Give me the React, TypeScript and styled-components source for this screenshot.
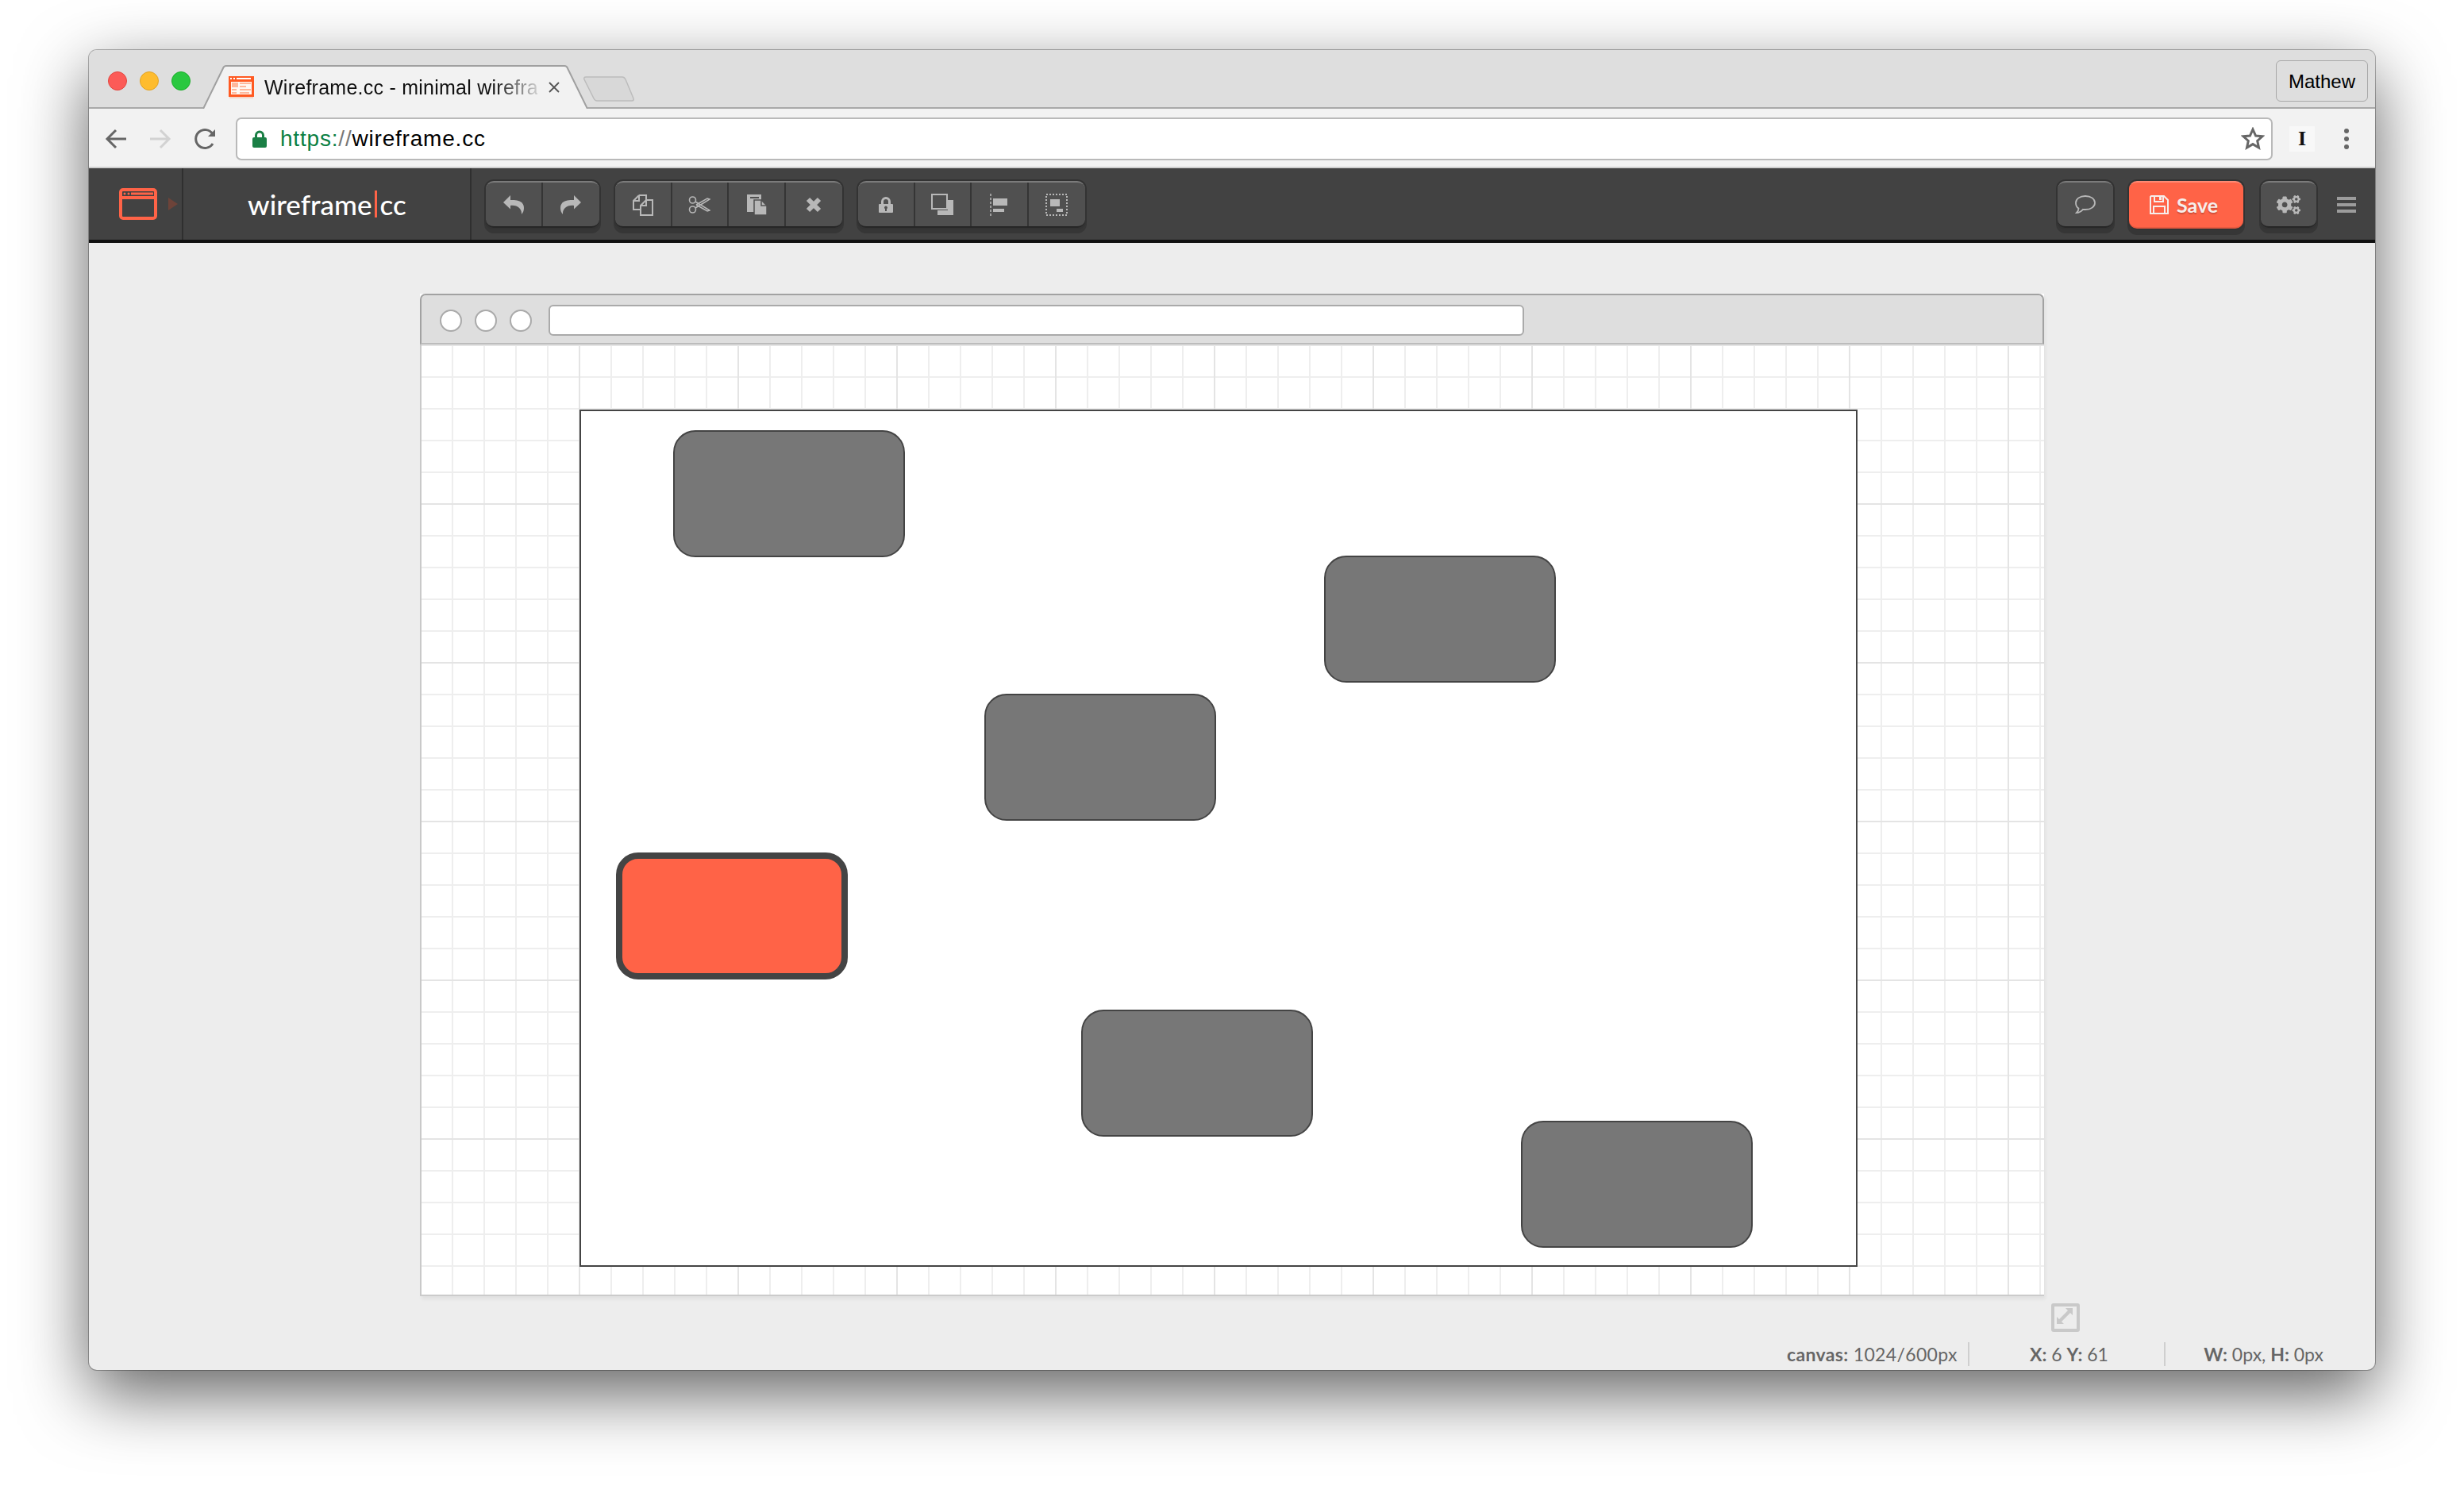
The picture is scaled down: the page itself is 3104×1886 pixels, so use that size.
import React from "react";
import styled, { createGlobalStyle } from "styled-components";
import { FaCogs } from "react-icons/fa";

const GlobalStyle = createGlobalStyle`
  html, body {
    margin: 0;
    padding: 0;
    background: #fff;
  }
  * {
    box-sizing: border-box;
  }
`;

const Page = styled.div`
  width: 3104px;
  height: 1886px;
  padding: 63px 0 0 112px;
  overflow: hidden;
  background: #fff;
`;

const Window = styled.div`
  width: 2880px;
  height: 1663px;
  display: flex;
  flex-direction: column;
  border-radius: 10px;
  background: #ededed;
  overflow: hidden;
  box-shadow: 0 0 0 1px rgba(0, 0, 0, 0.28), 0 30px 86px 0 rgba(0, 0, 0, 0.62);
`;

const TabStrip = styled.div`
  height: 74px;
  flex: none;
  display: flex;
  align-items: flex-end;
  position: relative;
  background: #dedede;
  border-bottom: 2px solid #a9a9a9;
  padding-left: 24px;
`;

const Lights = styled.div`
  display: flex;
  gap: 16px;
  align-self: flex-start;
  margin-top: 27px;
`;

const Light = styled.span<{ $color: string; $edge: string }>`
  width: 24px;
  height: 24px;
  border-radius: 50%;
  background: ${(p) => p.$color};
  border: 1px solid ${(p) => p.$edge};
`;

const Tab = styled.div`
  position: relative;
  width: 484px;
  height: 55px;
  margin: 0 0 -2px 16px;
  padding: 14px 0 0 32px;
  display: flex;
  align-items: flex-start;
`;

const TabShape = styled.svg`
  position: absolute;
  left: 0;
  top: 0;
`;

const Favicon = styled.svg`
  position: relative;
  flex: none;
`;

const TabTitle = styled.span`
  position: relative;
  width: 344px;
  margin-left: 13px;
  font: 25px/28px "Liberation Sans", Arial, sans-serif;
  letter-spacing: 0.25px;
  color: #111;
  white-space: nowrap;
  overflow: hidden;
  -webkit-mask-image: linear-gradient(to right, #000 84%, rgba(0, 0, 0, 0.15));
  mask-image: linear-gradient(to right, #000 84%, rgba(0, 0, 0, 0.15));
`;

const TabClose = styled.svg`
  position: relative;
  margin: 7px 0 0 14px;
`;

const NewTab = styled.svg`
  align-self: flex-start;
  margin: 33px 0 0 -6px;
`;

const ProfileButton = styled.div`
  width: 116px;
  height: 52px;
  margin-left: auto;
  margin-right: 9px;
  align-self: flex-start;
  margin-top: 13px;
  border: 1px solid #a8a8a8;
  border-radius: 6px;
  font: 24px/52px "Liberation Sans", Arial, sans-serif;
  color: #000;
  text-align: center;
`;

const AddressBar = styled.div`
  height: 75px;
  flex: none;
  display: flex;
  align-items: center;
  background: #f2f2f2;
  padding: 2px 0 0 20px;
  border-bottom: 2px solid #cfcfcf;
`;

const NavIcon = styled.svg`
  flex: none;
  margin-right: 28px;
`;

const Omnibox = styled.div`
  width: 2566px;
  height: 54px;
  margin-left: -5px;
  display: flex;
  align-items: center;
  padding: 0 8px 0 19px;
  background: #fff;
  border: 2px solid #b9b9b9;
  border-radius: 7px;
`;

const Url = styled.div`
  margin-left: 17px;
  font: 28px/1 "Liberation Sans", Arial, sans-serif;
  letter-spacing: 0.8px;
  color: #000;
`;

const UrlScheme = styled.span`
  color: #0b8043;
`;

const UrlSlashes = styled.span`
  color: #777;
`;

const StarIcon = styled.svg`
  margin-left: auto;
`;

const ExtensionIcon = styled.div`
  width: 32px;
  height: 32px;
  margin-left: 21px;
  background: #f8f8f8;
  font: bold 26px/32px "Liberation Serif", "Times New Roman", serif;
  color: #111;
  text-align: center;
`;

const MenuDots = styled.div`
  margin-left: 37px;
  display: flex;
  flex-direction: column;
  gap: 4px;
`;

const MenuDot = styled.span`
  width: 6px;
  height: 6px;
  border-radius: 50%;
  background: #666;
`;

const AppBar = styled.div`
  height: 94px;
  flex: none;
  display: flex;
  align-items: flex-start;
  background: #424242;
  border-bottom: 4px solid #111;
  padding-right: 24px;
`;

const LogoCell = styled.div`
  width: 119px;
  height: 90px;
  flex: none;
  display: flex;
  align-items: center;
  padding-left: 38px;
  border-right: 2px solid #2f2f2f;
`;

const LogoArrow = styled.span`
  margin-left: 14px;
  border-style: solid;
  border-width: 8px 0 8px 12px;
  border-color: transparent transparent transparent #6d4339;
`;

const BrandCell = styled.div`
  width: 363px;
  height: 90px;
  flex: none;
  display: flex;
  align-items: center;
  padding: 0 0 0 81px;
  border-right: 2px solid #2f2f2f;
  font: 500 35px/1 Lato, sans-serif;
  color: #fff;
`;

const BrandBar = styled.span`
  width: 3px;
  height: 34px;
  margin: 0 3px 0 4px;
  background: #ff6347;
`;

const Tools = styled.div`
  display: flex;
  gap: 20px;
  margin: 16px 0 0 18px;
`;

const ToolGroup = styled.div`
  display: flex;
  height: 59px;
  border-radius: 10px;
  overflow: hidden;
  background: #505050;
  box-shadow: 0 0 0 2px #333, 0 5px 0 2px #363636;
  border-top: 2px solid #7b7b7b;
  border-bottom: 2px solid #262626;
`;

const ToolButton = styled.div`
  width: 71.5px;
  height: 100%;
  display: flex;
  align-items: center;
  justify-content: center;
  border-right: 2px solid #353535;
  color: #b8b8b8;
  &:last-child {
    border-right: none;
  }
`;

const RightTools = styled.div`
  display: flex;
  align-items: flex-start;
  margin: 16px 0 0 auto;
`;

const SquareButton = styled(ToolButton)`
  width: 70px;
  height: 59px;
  border: none;
  border-top: 2px solid #7b7b7b;
  border-bottom: 2px solid #262626;
  border-radius: 10px;
  background: #505050;
  box-shadow: 0 0 0 2px #333, 0 5px 0 2px #363636;
  &:last-child {
    border-right: none;
  }
`;

const SaveButton = styled.div`
  width: 144px;
  height: 60px;
  margin: 0 22px 0 20px;
  display: flex;
  align-items: center;
  gap: 10px;
  padding-left: 26px;
  border-radius: 10px;
  background: #ff6347;
  border-top: 2px solid #ff8a74;
  border-bottom: 2px solid #e85a40;
  box-shadow: 0 0 0 2px #333, 0 6px 0 2px #363636;
  font: 700 25px/1 Lato, sans-serif;
  color: #f6eeec;
  text-shadow: 0 2px 1px rgba(0, 0, 0, 0.18);
`;

const Hamburger = styled.div`
  margin: 20px 0 0 26px;
  display: flex;
  flex-direction: column;
  gap: 4px;
`;

const HamburgerBar = styled.span`
  width: 24px;
  height: 4px;
  background: #9c9c9c;
`;

const Workspace = styled.div`
  flex: 1;
  display: flex;
  flex-direction: column;
  padding: 64px 0 0 417px;
`;

const Mock = styled.div`
  width: 2046px;
  height: 1263px;
  flex: none;
  display: flex;
  flex-direction: column;
  background: #fff;
  box-shadow: 2px 4px 4px rgba(0, 0, 0, 0.05);
`;

const MockHead = styled.div`
  height: 64px;
  flex: none;
  display: flex;
  align-items: center;
  gap: 16px;
  padding: 3px 0 0 23px;
  background: #dedede;
  border: 2px solid #a2a2a2;
  border-bottom: 2px solid #bcbcbc;
  border-radius: 7px 7px 0 0;
`;

const MockDot = styled.span`
  width: 28px;
  height: 28px;
  border-radius: 50%;
  background: #fff;
  border: 2px solid #aaa;
`;

const MockUrl = styled.div`
  width: 1229px;
  height: 39px;
  margin-left: 5px;
  background: #fff;
  border: 2px solid #aaa;
  border-radius: 6px;
`;

const Grid = styled.div`
  flex: 1;
  padding: 82px 0 0 199px;
  border-left: 2px solid #c9c9c9;
  border-bottom: 2px solid #cbcbcb;
  background-color: #fff;
  background-image: linear-gradient(to right, #e4e4e4 2px, transparent 2px),
    linear-gradient(to bottom, #e4e4e4 2px, transparent 2px),
    linear-gradient(to right, #eee 2px, transparent 2px),
    linear-gradient(to bottom, #eee 2px, transparent 2px);
  background-size: 200px 200px, 200px 200px, 40px 40px, 40px 40px;
  background-position: 198px 0, 0 200px, 38px 0, 0 40px;
`;

const Canvas = styled.div`
  position: relative;
  width: 1610px;
  height: 1080px;
  background: #fff;
  border: 2px solid #444;
`;

const Shape = styled.div<{ $x: number; $y: number; $active?: boolean }>`
  position: absolute;
  left: ${(p) => p.$x}px;
  top: ${(p) => p.$y}px;
  width: 292px;
  height: 160px;
  border-radius: 28px;
  background: ${(p) => (p.$active ? "#ff6347" : "#777")};
  border: ${(p) => (p.$active ? 8 : 2)}px solid #444;
`;

const ResizeHandle = styled.div`
  width: 36px;
  height: 36px;
  flex: none;
  margin: 9px 0 0 2055px;
  border: 4px solid #c9c9c9;
  border-radius: 3px;
`;

const StatusBar = styled.div`
  display: flex;
  justify-content: flex-end;
  height: 30px;
  margin-top: 13px;
  padding-right: 65px;
  font: 23px/30px Lato, sans-serif;
  color: #666;
`;

const StatusItem = styled.div<{ $width: number; $align: string; $divider?: boolean; $inset?: number; $tracking?: number }>`
  width: ${(p) => p.$width}px;
  text-align: ${(p) => p.$align};
  padding: 0 ${(p) => (p.$divider ? 14 : 0)}px 0 ${(p) => p.$inset ?? 0}px;
  border-right: ${(p) => (p.$divider ? "2px solid #cfcfcf" : "none")};
  letter-spacing: ${(p) => p.$tracking ?? 0}px;
  white-space: nowrap;

  b {
    font-weight: 700;
  }
`;

const shapes = [
  { x: 116, y: 24 },
  { x: 936, y: 182 },
  { x: 508, y: 356 },
  { x: 630, y: 754 },
  { x: 1184, y: 894 },
  { x: 44, y: 556, active: true },
];

const iconProps = { width: 28, height: 28, viewBox: "0 0 28 28" };

const UndoIcon = () => (
  <svg width="26" height="24" viewBox="0 0 26 24" fill="currentColor">
    <path d="M0 9L9 0v6c10-.5 17 2 17 10 0 3-1 6-3 8 .5-7-5-12-14-11v4.500z" />
  </svg>
);

const RedoIcon = () => (
  <svg width="26" height="24" viewBox="0 0 26 24" fill="currentColor">
    <path d="M26 9L17 0v6C7 5.500 0 8 0 16c0 3 1 6 3 8-.5-7 5-12 14-11v4.500z" />
  </svg>
);

const CopyIcon = () => (
  <svg {...iconProps} fill="none" stroke="currentColor" strokeWidth="2">
    <path d="M9 2h9v6" />
    <path d="M9 2L2 9v11h9" />
    <path d="M9 2v7H2" />
    <path d="M18 8h8v19H11V15z" />
    <path d="M18 8v7h-7" />
  </svg>
);

const ScissorsIcon = () => (
  <svg {...iconProps} fill="none" stroke="currentColor" strokeWidth="1.600">
    <circle cx="5.500" cy="8" r="4" />
    <circle cx="5.500" cy="20" r="4" />
    <path d="M9 10l18 11-3 1-14-8" />
    <path d="M9 18l18-11-3-1-14 8" />
  </svg>
);

const PasteIcon = () => (
  <svg {...iconProps} fill="currentColor">
    <path d="M2 1h18v22H2z" />
    <rect x="6" y="4" width="11" height="2" fill="#505050" />
    <path d="M11 8h9l7 7v12H11z" stroke="#505050" strokeWidth="1.500" />
    <path d="M20 8v7h7" fill="none" stroke="#505050" strokeWidth="1.500" />
  </svg>
);

const CloseIcon = () => (
  <svg {...iconProps} stroke="currentColor" strokeWidth="6">
    <path d="M7 7l14 14M21 7L7 21" />
  </svg>
);

const LockIcon = () => (
  <svg {...iconProps} fill="currentColor" fillRule="evenodd">
    <path d="M6 13h2V10a6 6 0 0 1 12 0v3h2a1 1 0 0 1 1 1v9a1 1 0 0 1-1 1H6a1 1 0 0 1-1-1v-9a1 1 0 0 1 1-1zm5 0h6v-3a3 3 0 0 0-6 0zm3 2.500a2 2 0 0 0-1 3.700V22h2v-2.800a2 2 0 0 0-1-3.700z" />
  </svg>
);

const FrontIcon = () => (
  <svg {...iconProps} fill="none">
    <path fill="currentColor" d="M21 8h7v19H8v-6h13z" />
    <rect x="1" y="1" width="19" height="18" stroke="currentColor" strokeWidth="2" />
  </svg>
);

const AlignIcon = () => (
  <svg {...iconProps} fill="currentColor">
    <path stroke="currentColor" strokeWidth="1.500" strokeDasharray="3 2" d="M3 0v28" />
    <rect x="6" y="6" width="18" height="9" />
    <rect x="6" y="19" width="14" height="4" />
  </svg>
);

const GroupIcon = () => (
  <svg {...iconProps} fill="currentColor">
    <rect x="1" y="1" width="26" height="26" fill="none" stroke="currentColor" strokeWidth="2" strokeDasharray="2 2" />
    <rect x="6" y="7" width="12" height="9" />
    <rect x="14" y="19" width="8" height="4" />
  </svg>
);

const CommentIcon = () => (
  <svg width="28" height="26" viewBox="0 0 28 26" fill="none" stroke="currentColor" strokeWidth="1.800">
    <path d="M14 2c7 0 12 3.500 12 8.500S21 19 14 19c-1 0-2 0-3-.2C9 21 6 23 3 23c1.500-1.500 2.500-3 2.500-5.500C3 16 2 13.500 2 10.500 2 5.500 7 2 14 2z" />
  </svg>
);

const SaveIcon = () => (
  <svg width="24" height="24" viewBox="0 0 24 24" fill="none" stroke="currentColor" strokeWidth="2">
    <path d="M2 1h16l5 5v17H1V2z" />
    <path d="M6 1v7h11V1" />
    <rect x="12" y="2" width="3" height="4" fill="currentColor" stroke="none" />
    <path d="M5 23v-9h14v9" />
  </svg>
);

export default function App() {
  return (
    <Page>
      <GlobalStyle />
      <Window>
        <TabStrip>
          <Lights>
            <Light $color="#fc5b57" $edge="#e2463f" />
            <Light $color="#febc2e" $edge="#e1a325" />
            <Light $color="#2ac840" $edge="#1dad2b" />
          </Lights>
          <Tab>
            <TabShape width="484" height="55" viewBox="0 0 484 55">
              <path
                d="M0 55 L25 4 Q26 1 29 1 L455 1 Q458 1 459 4 L484 55"
                fill="#f2f2f2"
                stroke="#a0a0a0"
                strokeWidth="2"
              />
            </TabShape>
            <Favicon width="32" height="28" viewBox="0 0 32 28">
              <rect x="1" y="26" width="30" height="2" fill="#f4d5c8" />
              <rect x="1.500" y="1.500" width="29" height="23" fill="#fff8f3" stroke="#ff5a22" strokeWidth="3" />
              <rect x="1" y="1" width="30" height="6" fill="#ff5a22" />
              <rect x="2" y="2" width="2" height="2" fill="#fff" />
              <rect x="6" y="2" width="2" height="2" fill="#fff" />
              <rect x="10" y="2" width="18" height="2" fill="#fff" />
              <rect x="4" y="8" width="8" height="6" fill="#ffb89c" />
              <rect x="14" y="8" width="14" height="2" fill="#ffb89c" />
              <rect x="14" y="12" width="8" height="2" fill="#ffb89c" />
              <rect x="4" y="16" width="6" height="2" fill="#ffb89c" />
              <rect x="14" y="16" width="14" height="2" fill="#ffb89c" />
              <rect x="4" y="20" width="6" height="2" fill="#ffb89c" />
              <rect x="14" y="20" width="12" height="2" fill="#ffb89c" />
            </Favicon>
            <TabTitle>Wireframe.cc - minimal wirefra</TabTitle>
            <TabClose width="14" height="14" viewBox="0 0 14 14" stroke="#555" strokeWidth="1.800">
              <path d="M1 1l12 12M13 1L1 13" />
            </TabClose>
          </Tab>
          <NewTab width="66" height="32" viewBox="0 0 66 32">
            <path
              d="M4 1h46c2 0 3 1 4 3l10 24c.5 2 0 3-2 3H18c-2 0-3-1-4-3L2 4C1.500 2 2 1 4 1z"
              fill="#d8d8d8"
              stroke="#bcbcbc"
              strokeWidth="1.500"
            />
          </NewTab>
          <ProfileButton>Mathew</ProfileButton>
        </TabStrip>

        <AddressBar>
          <NavIcon width="28" height="26" viewBox="0 0 28 26" fill="none" stroke="#666" strokeWidth="3">
            <path d="M27 13H3M14 2L3 13l11 11" />
          </NavIcon>
          <NavIcon width="28" height="26" viewBox="0 0 28 26" fill="none" stroke="#d2d2d2" strokeWidth="3">
            <path d="M1 13h24M14 2l11 11-11 11" />
          </NavIcon>
          <NavIcon width="30" height="30" viewBox="0 0 30 30" fill="none" stroke="#666" strokeWidth="3">
            <path d="M24 21a11.500 11.500 0 1 1 0-12" />
            <path d="M27 3v9h-9z" fill="#666" stroke="none" />
          </NavIcon>
          <Omnibox>
            <svg width="18" height="22" viewBox="0 0 18 22" fill="#1a7f45">
              <path d="M3 9V6.500a6 6 0 0 1 12 0V9h1a2 2 0 0 1 2 2v9a2 2 0 0 1-2 2H2a2 2 0 0 1-2-2v-9a2 2 0 0 1 2-2zm3 0h6V6.500a3 3 0 0 0-6 0z" />
            </svg>
            <Url>
              <UrlScheme>https:</UrlScheme>
              <UrlSlashes>//</UrlSlashes>wireframe.cc
            </Url>
            <StarIcon width="30" height="30" viewBox="0 0 30 30" fill="none" stroke="#666" strokeWidth="3">
              <path d="M15 3l3.600 8 8.400.8-6.300 5.700 1.800 8.500-7.500-4.400L7.500 26l1.800-8.500L3 11.800l8.400-.8z" />
            </StarIcon>
          </Omnibox>
          <ExtensionIcon>I</ExtensionIcon>
          <MenuDots>
            <MenuDot />
            <MenuDot />
            <MenuDot />
          </MenuDots>
        </AddressBar>

        <AppBar>
          <LogoCell>
            <svg width="48" height="40" viewBox="0 0 48 40" fill="none" stroke="#ff6347" strokeWidth="4">
              <rect x="2" y="2" width="44" height="36" rx="3" />
              <path d="M2 12h44" />
              <path d="M15 7h28" strokeWidth="3" />
              <circle cx="7" cy="7" r="1.500" fill="#ff6347" stroke="none" />
              <circle cx="12" cy="7" r="1.500" fill="#ff6347" stroke="none" />
            </svg>
            <LogoArrow />
          </LogoCell>
          <BrandCell>
            wireframe<BrandBar />cc
          </BrandCell>
          <Tools>
            <ToolGroup>
              <ToolButton>
                <UndoIcon />
              </ToolButton>
              <ToolButton>
                <RedoIcon />
              </ToolButton>
            </ToolGroup>
            <ToolGroup>
              <ToolButton>
                <CopyIcon />
              </ToolButton>
              <ToolButton>
                <ScissorsIcon />
              </ToolButton>
              <ToolButton>
                <PasteIcon />
              </ToolButton>
              <ToolButton>
                <CloseIcon />
              </ToolButton>
            </ToolGroup>
            <ToolGroup>
              <ToolButton>
                <LockIcon />
              </ToolButton>
              <ToolButton>
                <FrontIcon />
              </ToolButton>
              <ToolButton>
                <AlignIcon />
              </ToolButton>
              <ToolButton>
                <GroupIcon />
              </ToolButton>
            </ToolGroup>
          </Tools>
          <RightTools>
            <SquareButton>
              <CommentIcon />
            </SquareButton>
            <SaveButton>
              <SaveIcon />
              Save
            </SaveButton>
            <SquareButton>
              <FaCogs size={30} />
            </SquareButton>
            <Hamburger>
              <HamburgerBar />
              <HamburgerBar />
              <HamburgerBar />
            </Hamburger>
          </RightTools>
        </AppBar>

        <Workspace>
          <Mock>
            <MockHead>
              <MockDot />
              <MockDot />
              <MockDot />
              <MockUrl />
            </MockHead>
            <Grid>
              <Canvas>
                {shapes.map((s) => (
                  <Shape key={`${s.x}-${s.y}`} $x={s.x} $y={s.y} $active={s.active} />
                ))}
              </Canvas>
            </Grid>
          </Mock>
          <ResizeHandle>
            <svg width="28" height="28" viewBox="0 0 28 28" fill="#c9c9c9">
              <path d="M23 2v9l-3-3-11 11 3 3H3v-9l3 3L17 5l-3-3z" />
            </svg>
          </ResizeHandle>
          <StatusBar>
            <StatusItem $width={230} $align="right" $divider $tracking={0.35}>
              <b>canvas:</b> 1024/600px
            </StatusItem>
            <StatusItem $width={247} $align="center" $divider $inset={20}>
              <b>X:</b> 6 <b>Y:</b> 61
            </StatusItem>
            <StatusItem $width={199} $align="right">
              <b>W:</b> 0px, <b>H:</b> 0px
            </StatusItem>
          </StatusBar>
        </Workspace>
      </Window>
    </Page>
  );
}
